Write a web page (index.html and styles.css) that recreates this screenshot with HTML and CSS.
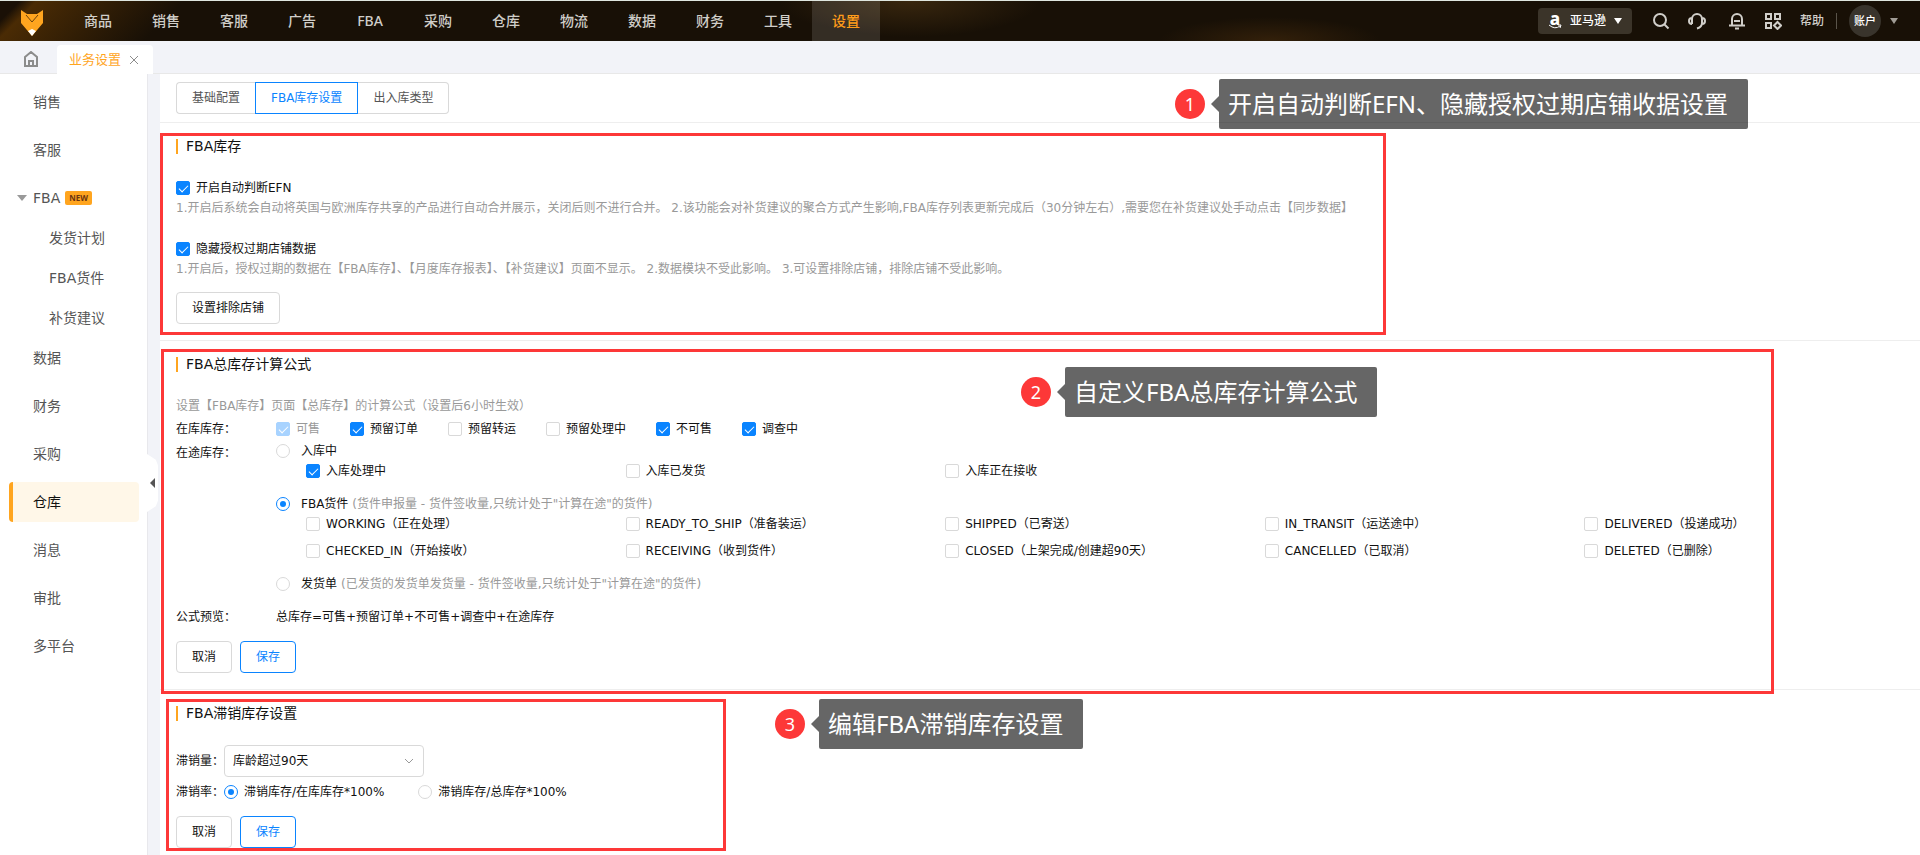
FILE: index.html
```html
<!DOCTYPE html>
<html lang="zh-CN">
<head>
  <meta charset="UTF-8">
  <title>业务设置</title>
  <meta name="viewport" content="width=device-width, initial-scale=1.0">
  <link rel="stylesheet" href="styles.css">
</head>
<body>
  <header class="topbar">
    <a class="logo" href="#" aria-label="首页">
      <svg width="24" height="28" viewBox="0 0 24 28">
        <path d="M1 1 L7 5 H17 L23 1 V14 L12 27 L1 14 Z" fill="#ffa51f"/>
        <path d="M6 6 L12 13 L18 6" fill="none" stroke="#6b420c" stroke-width="1"/>
        <path d="M8 22 L12 20 L16 22 L12 27 Z" fill="#fff"/>
      </svg>
    </a>
    <nav class="main-nav">
      <a href="#">商品</a>
      <a href="#">销售</a>
      <a href="#">客服</a>
      <a href="#">广告</a>
      <a href="#">FBA</a>
      <a href="#">采购</a>
      <a href="#">仓库</a>
      <a href="#">物流</a>
      <a href="#">数据</a>
      <a href="#">财务</a>
      <a href="#">工具</a>
      <a href="#" class="active">设置</a>
    </nav>
    <div class="tools">
      <button class="platform" type="button">
        <span class="amazon">a
          <svg width="14" height="5" viewBox="0 0 14 5"><path d="M1 1 Q7 6 12 2 M10 1 L13 1 L12 4" fill="none" stroke="#fff"/></svg>
        </span>
        亚马逊
        <span class="caret"></span>
      </button>
      <button class="tool" type="button" aria-label="搜索">
        <svg width="18" height="18" viewBox="0 0 18 18"><circle cx="8" cy="8" r="6"/><path d="M12.5 12.5 L16.5 16.5"/></svg>
      </button>
      <button class="tool" type="button" aria-label="客服">
        <svg width="18" height="18" viewBox="0 0 18 18"><path d="M4 12 V7 A5 5 0 0 1 14 7 V11 Q14 15 9 16.5 M4 6 Q1 6 1 9 Q1 12 4 12 M14 6 Q17 6 17 9 Q17 12 14 12"/></svg>
      </button>
      <button class="tool bell" type="button" aria-label="通知">
        <svg width="18" height="18" viewBox="0 0 18 18"><path d="M4 13 V7 A5 5 0 0 1 14 7 V13 M1 13.5 H17 M6 9 H12 M7 16.5 H11"/></svg>
      </button>
      <button class="tool" type="button" aria-label="应用">
        <svg width="18" height="18" viewBox="0 0 18 18"><rect x="2" y="2" width="5" height="5"/><rect x="11" y="2" width="5" height="5"/><rect x="2" y="11" width="5" height="5"/><path d="M13.5 10 L17 13.5 L13.5 17 L10 13.5 Z"/></svg>
      </button>
      <a class="help" href="#">帮助</a>
      <span class="divider"></span>
      <button class="account" type="button"><span class="avatar">账户</span><span class="caret"></span></button>
    </div>
  </header>

  <div class="page-tabs">
    <a class="home" href="#" aria-label="首页">
      <svg width="16" height="16" viewBox="0 0 16 16"><path d="M2 6 L8 1 L14 6 V15 H2 Z M6 15 V10 H10 V15"/></svg>
    </a>
    <div class="page-tab">
      <a href="#">业务设置</a>
      <button type="button" aria-label="关闭">
        <svg width="10" height="10" viewBox="0 0 10 10"><path d="M1 1 L9 9 M9 1 L1 9"/></svg>
      </button>
    </div>
  </div>

  <div class="layout">
    <aside class="sidebar">
      <nav>
        <a href="#">销售</a>
        <a href="#">客服</a>
        <a href="#" class="open"><span class="caret"></span>FBA<span class="new">NEW</span></a>
        <div class="sub">
          <a href="#">发货计划</a>
          <a href="#">FBA货件</a>
          <a href="#">补货建议</a>
        </div>
        <a href="#">数据</a>
        <a href="#">财务</a>
        <a href="#">采购</a>
        <a href="#" class="active">仓库</a>
        <a href="#">消息</a>
        <a href="#">审批</a>
        <a href="#">多平台</a>
      </nav>
      <button class="collapse" type="button" aria-label="收起"></button>
    </aside>

    <main class="content">
      <div class="sub-tabs">
        <button type="button">基础配置</button>
        <button type="button" class="active">FBA库存设置</button>
        <button type="button">出入库类型</button>
        <div class="callout callout-1"><span class="num">1</span><span class="tip">开启自动判断EFN、隐藏授权过期店铺收据设置</span></div>
      </div>

      <section class="panel">
        <h2>FBA库存</h2>
        <label class="check"><input type="checkbox" checked>开启自动判断EFN</label>
        <p class="hint">1.开启后系统会自动将英国与欧洲库存共享的产品进行自动合并展示，关闭后则不进行合并。 2.该功能会对补货建议的聚合方式产生影响,FBA库存列表更新完成后（30分钟左右）,需要您在补货建议处手动点击【同步数据】</p>
        <label class="check second"><input type="checkbox" checked>隐藏授权过期店铺数据</label>
        <p class="hint">1.开启后，授权过期的数据在【FBA库存】、【月度库存报表】、【补货建议】页面不显示。 2.数据模块不受此影响。 3.可设置排除店铺，排除店铺不受此影响。</p>
        <div class="actions exclude">
          <button type="button" class="btn">设置排除店铺</button>
        </div>
        <div class="mark mark-1"></div>
      </section>

      <section class="panel">
        <h2>FBA总库存计算公式</h2>
        <p class="hint">设置【FBA库存】页面【总库存】的计算公式（设置后6小时生效）</p>
        <div class="formula">
          <span>在库库存：</span>
          <div class="stock">
            <label class="check"><input type="checkbox" checked disabled>可售</label>
            <label class="check"><input type="checkbox" checked>预留订单</label>
            <label class="check"><input type="checkbox">预留转运</label>
            <label class="check"><input type="checkbox">预留处理中</label>
            <label class="check"><input type="checkbox" checked>不可售</label>
            <label class="check"><input type="checkbox" checked>调查中</label>
          </div>
          <span class="transit-label">在途库存：</span>
          <div class="transit">
            <label class="radio"><input type="radio" name="transit">入库中</label>
            <div class="states">
              <label class="check"><input type="checkbox" checked>入库处理中</label>
              <label class="check"><input type="checkbox">入库已发货</label>
              <label class="check"><input type="checkbox">入库正在接收</label>
            </div>
            <label class="radio"><input type="radio" name="transit" checked>FBA货件 <span>(货件申报量 - 货件签收量,只统计处于"计算在途"的货件)</span></label>
            <div class="states">
              <label class="check"><input type="checkbox">WORKING（正在处理）</label>
              <label class="check"><input type="checkbox">READY_TO_SHIP（准备装运）</label>
              <label class="check"><input type="checkbox">SHIPPED（已寄送）</label>
              <label class="check"><input type="checkbox">IN_TRANSIT（运送途中）</label>
              <label class="check"><input type="checkbox">DELIVERED（投递成功）</label>
              <label class="check"><input type="checkbox">CHECKED_IN（开始接收）</label>
              <label class="check"><input type="checkbox">RECEIVING（收到货件）</label>
              <label class="check"><input type="checkbox">CLOSED（上架完成/创建超90天）</label>
              <label class="check"><input type="checkbox">CANCELLED（已取消）</label>
              <label class="check"><input type="checkbox">DELETED（已删除）</label>
            </div>
            <label class="radio"><input type="radio" name="transit">发货单 <span>(已发货的发货单发货量 - 货件签收量,只统计处于"计算在途"的货件)</span></label>
          </div>
          <span class="preview">公式预览：</span>
          <span class="preview">总库存=可售+预留订单+不可售+调查中+在途库存</span>
        </div>
        <div class="actions">
          <button type="button" class="btn">取消</button>
          <button type="button" class="btn primary">保存</button>
        </div>
        <div class="mark mark-2"></div>
        <div class="callout callout-2"><span class="num">2</span><span class="tip">自定义FBA总库存计算公式</span></div>
      </section>

      <section class="panel last">
        <h2>FBA滞销库存设置</h2>
        <div class="field">
          <label for="unsold">滞销量：</label>
          <div class="select">
            <select id="unsold">
              <option>库龄超过90天</option>
            </select>
            <svg width="10" height="6" viewBox="0 0 10 6"><path d="M1 1 L5 5 L9 1"/></svg>
          </div>
        </div>
        <div class="field rate">
          <span>滞销率：</span>
          <label class="check"><input type="radio" name="rate" checked>滞销库存/在库库存*100%</label>
          <label class="check"><input type="radio" name="rate">滞销库存/总库存*100%</label>
        </div>
        <div class="actions">
          <button type="button" class="btn">取消</button>
          <button type="button" class="btn primary">保存</button>
        </div>
        <div class="mark mark-3"></div>
        <div class="callout callout-3"><span class="num">3</span><span class="tip">编辑FBA滞销库存设置</span></div>
      </section>
    </main>
  </div>
</body>
</html>
```
FILE: styles.css
```css
:root {
  --orange: #ffa51f;
  --blue: #0a84ff;
  --red: #fd3838;
  --border: #d9d9d9;
  --line: #eeeeee;
  --page-bg: #f2f3f8;
  --muted: #999999;
}

* {
  box-sizing: border-box;
}

body {
  margin: 0;
  background: var(--page-bg);
  color: #111;
  font-family: 'DejaVu Sans', 'Noto Sans CJK SC', sans-serif;
  font-size: 12px;
  line-height: 20px;
  min-height: 100vh;
  display: flex;
  flex-direction: column;
}

a {
  color: inherit;
  text-decoration: none;
}

button, select {
  font: inherit;
  color: inherit;
  cursor: pointer;
}

h2, p {
  margin: 0;
}

/* top bar */
.topbar {
  display: flex;
  height: 41px;
  border-top: 1px solid #dfe6df;
  background:
    radial-gradient(ellipse 130px 36px at 910px 0, #38260e, transparent),
    radial-gradient(ellipse 110px 24px at 1270px 40px, #33200a, transparent),
    linear-gradient(135deg, #1a1006 0, #1a1006 14px, #4a2b04 26px, transparent 130px),
    #181006;
  color: #d0cec9;
  font-family: 'Noto Sans', 'Noto Sans CJK SC', sans-serif;
}

.logo {
  width: 64px;
  padding: 8px 20px;
}

.logo svg {
  display: block;
}

.main-nav {
  display: flex;
  font-size: 14px;
  font-weight: 500;
  line-height: 40px;
}

.main-nav a {
  min-width: 68px;
  text-align: center;
}

.main-nav .active {
  background: rgba(255, 255, 255, 0.12);
  color: #ff9c1a;
}

.tools {
  display: flex;
  align-items: center;
  margin-left: auto;
  padding-right: 22px;
}

.tools button {
  display: flex;
  align-items: center;
  border: 0;
  background: none;
}

.caret {
  border: 4px solid transparent;
  border-top: 6px solid #fff;
  border-bottom: 0;
}

.tools .platform {
  height: 26px;
  margin-right: 20px;
  padding: 0 10px;
  gap: 8px;
  border-radius: 4px;
  background: #3b3429;
  color: #fff;
  font-weight: 500;
}

.amazon {
  display: flex;
  flex-direction: column;
  align-items: center;
  font-size: 17px;
  font-weight: 800;
  line-height: 11px;
}

.tool {
  margin-right: 18px;
  padding: 0;
}

.tool.bell {
  margin-left: 4px;
}

.tool svg {
  fill: none;
  stroke: #d0cec9;
  stroke-width: 2;
}

.help {
  font-weight: 500;
}

.divider {
  width: 1px;
  height: 16px;
  margin: 0 12px;
  background: #5a544a;
}

.tools .account {
  padding: 0;
  gap: 9px;
}

.account .caret {
  border-top-color: #a09c95;
}

.avatar {
  width: 32px;
  height: 32px;
  border-radius: 50%;
  background: #39342c;
  color: #fff;
  font-size: 11px;
  font-weight: 500;
  line-height: 32px;
}

/* opened pages */
.page-tabs {
  display: flex;
  height: 33px;
  padding-top: 4px;
  border-bottom: 1px solid #e8e8e8;
}

.page-tabs svg {
  display: block;
  fill: none;
  stroke: #8c8c8c;
}

.home {
  width: 57px;
  padding: 6px 23px;
}

.home svg {
  stroke-width: 2;
}

.page-tab {
  display: flex;
  align-items: center;
  gap: 8px;
  height: 29px;
  padding: 0 14px 0 12px;
  border-radius: 4px 4px 0 0;
  background: #fff;
  color: var(--orange);
  font-size: 13px;
}

.page-tab button {
  padding: 0;
  border: 0;
  background: none;
}

.layout {
  flex: 1;
  display: flex;
}

/* side menu */
.sidebar {
  position: relative;
  width: 148px;
  flex-shrink: 0;
  padding: 8px 8px 8px 9px;
  background: #fff;
  border-right: 1px solid #e8e8ec;
  color: #555;
  font-size: 14px;
}

.sidebar a {
  display: flex;
  align-items: center;
  height: 40px;
  margin-bottom: 8px;
  padding-left: 24px;
}

.sidebar a.open {
  margin: 0;
  padding-left: 8px;
}

.sidebar .caret {
  margin-right: 6px;
  border-width: 6px 5px 0;
  border-top-color: #999;
}

.sidebar .sub a {
  margin: 0;
  padding-left: 40px;
}

.sidebar a.active {
  border-left: 4px solid var(--orange);
  border-radius: 4px;
  padding-left: 20px;
  background: #fff7e8;
  color: #111;
}

.new {
  margin-left: 5px;
  padding: 0 4px;
  border-radius: 2px;
  background: var(--orange);
  color: #6b3410;
  font-family: 'Noto Sans', sans-serif;
  font-size: 8px;
  font-weight: bold;
  line-height: 14px;
}

.collapse {
  position: absolute;
  top: 380px;
  right: -11px;
  width: 11px;
  height: 58px;
  padding: 0;
  border: 0;
  background: #fff;
  clip-path: polygon(0 0, 80% 10%, 100% 20%, 100% 80%, 80% 90%, 0 100%);
}

.collapse::before {
  content: '';
  position: absolute;
  top: 24px;
  left: 3px;
  border: 5px solid transparent;
  border-right-color: #555;
  border-left: 0;
}

/* content */
.content {
  flex: 1;
  min-width: 0;
  margin-left: 12px;
  background: #fff;
}

.sub-tabs {
  position: relative;
  display: flex;
  padding: 8px 16px;
  border-bottom: 1px solid var(--line);
}

.sub-tabs button {
  height: 32px;
  padding: 0 15px;
  border: 1px solid var(--border);
  background: #fff;
  color: #555;
}

.sub-tabs button:first-child {
  border-right: 0;
  border-radius: 4px 0 0 4px;
}

.sub-tabs button:nth-child(3) {
  border-left: 0;
  border-radius: 0 4px 4px 0;
}

.sub-tabs .active {
  border-color: var(--blue);
  color: var(--blue);
}

.panel {
  position: relative;
  padding: 16px;
  border-bottom: 1px solid var(--line);
}

.panel.last {
  padding-bottom: 6px;
  border-bottom: 0;
}

h2 {
  margin-bottom: 24px;
  padding-left: 8px;
  border-left: 2px solid var(--orange);
  font-size: 14px;
  font-weight: normal;
  line-height: 15px;
}

.hint {
  color: var(--muted);
}

.check, .radio {
  display: flex;
  align-items: center;
  gap: 6px;
}

.radio {
  gap: 11px;
}

.radio span {
  margin-left: -7px;
  color: var(--muted);
}

.check.second {
  margin-top: 21px;
}

input {
  appearance: none;
  position: relative;
  flex-shrink: 0;
  width: 14px;
  height: 14px;
  margin: 0;
  border: 1px solid var(--border);
  border-radius: 2px;
  background: #fff;
}

input[type="radio"] {
  border-radius: 50%;
}

input:checked {
  border-color: var(--blue);
}

input[type="checkbox"]:checked {
  background: var(--blue);
}

input[type="checkbox"]:checked::before {
  content: '';
  position: absolute;
  top: 1px;
  left: 4px;
  width: 4px;
  height: 8px;
  border: solid #fff;
  border-width: 0 1px 1px 0;
  transform: rotate(45deg);
}

input[type="radio"]:checked::before {
  content: '';
  position: absolute;
  top: 3px;
  left: 3px;
  width: 6px;
  height: 6px;
  border-radius: 50%;
  background: var(--blue);
}

input:disabled {
  opacity: 0.35;
}

.check:has(:disabled) {
  color: var(--muted);
}

.formula {
  display: grid;
  grid-template-columns: 100px 1fr;
  row-gap: 2px;
  margin-top: 3px;
}

.stock {
  display: flex;
  gap: 30px;
}

.transit-label {
  padding-top: 2px;
}

.states {
  display: grid;
  grid-template-columns: repeat(5, 1fr);
  row-gap: 7px;
  margin-bottom: 13px;
  padding-left: 30px;
}

.preview {
  padding-top: 11px;
}

.actions {
  display: flex;
  gap: 8px;
  margin-top: 14px;
}

.actions.exclude {
  margin-top: 13px;
}

.btn {
  height: 32px;
  padding: 0 15px;
  border: 1px solid var(--border);
  border-radius: 4px;
  background: #fff;
}

.btn.primary {
  border-color: var(--blue);
  color: var(--blue);
}

.field {
  display: flex;
  align-items: center;
}

.field > :first-child {
  width: 48px;
}

.rate {
  margin-top: 5px;
}

.rate .check + .check {
  margin-left: 34px;
}

.select {
  position: relative;
}

.select select {
  appearance: none;
  width: 200px;
  height: 32px;
  padding: 0 8px;
  border: 1px solid var(--border);
  border-radius: 4px;
  background: #fff;
}

.select svg {
  position: absolute;
  top: 13px;
  right: 10px;
  fill: none;
  stroke: #999;
  pointer-events: none;
}

/* guide marks over the form */
.mark {
  position: absolute;
  border: 3px solid var(--red);
  pointer-events: none;
}

.mark-1 {
  top: 10px;
  bottom: 5px;
  left: 0;
  width: 1226px;
}

.mark-2 {
  z-index: 1;
  top: 8px;
  bottom: -5px;
  left: 1px;
  width: 1613px;
}

.mark-3 {
  top: 9px;
  bottom: 3px;
  left: 6px;
  width: 560px;
}

.callout {
  position: absolute;
  z-index: 2;
  display: flex;
  align-items: center;
  gap: 14px;
  color: #fff;
  font-family: 'Noto Sans', 'Noto Sans CJK SC', sans-serif;
  white-space: nowrap;
}

.callout-1 {
  top: 5px;
  left: 1015px;
}

.callout-2 {
  top: 26px;
  left: 861px;
}

.callout-3 {
  top: 9px;
  left: 615px;
}

.num {
  width: 30px;
  height: 30px;
  border-radius: 50%;
  background: var(--red);
  font-size: 18px;
  line-height: 30px;
  text-align: center;
}

.tip {
  position: relative;
  height: 50px;
  padding: 0 20px 0 9px;
  border-radius: 2px;
  background: rgba(0, 0, 0, 0.6);
  font-size: 24px;
  line-height: 50px;
}

.tip::before {
  content: '';
  position: absolute;
  top: 17px;
  left: -8px;
  border: 8px solid transparent;
  border-right-color: rgba(0, 0, 0, 0.6);
  border-left: 0;
}
```
